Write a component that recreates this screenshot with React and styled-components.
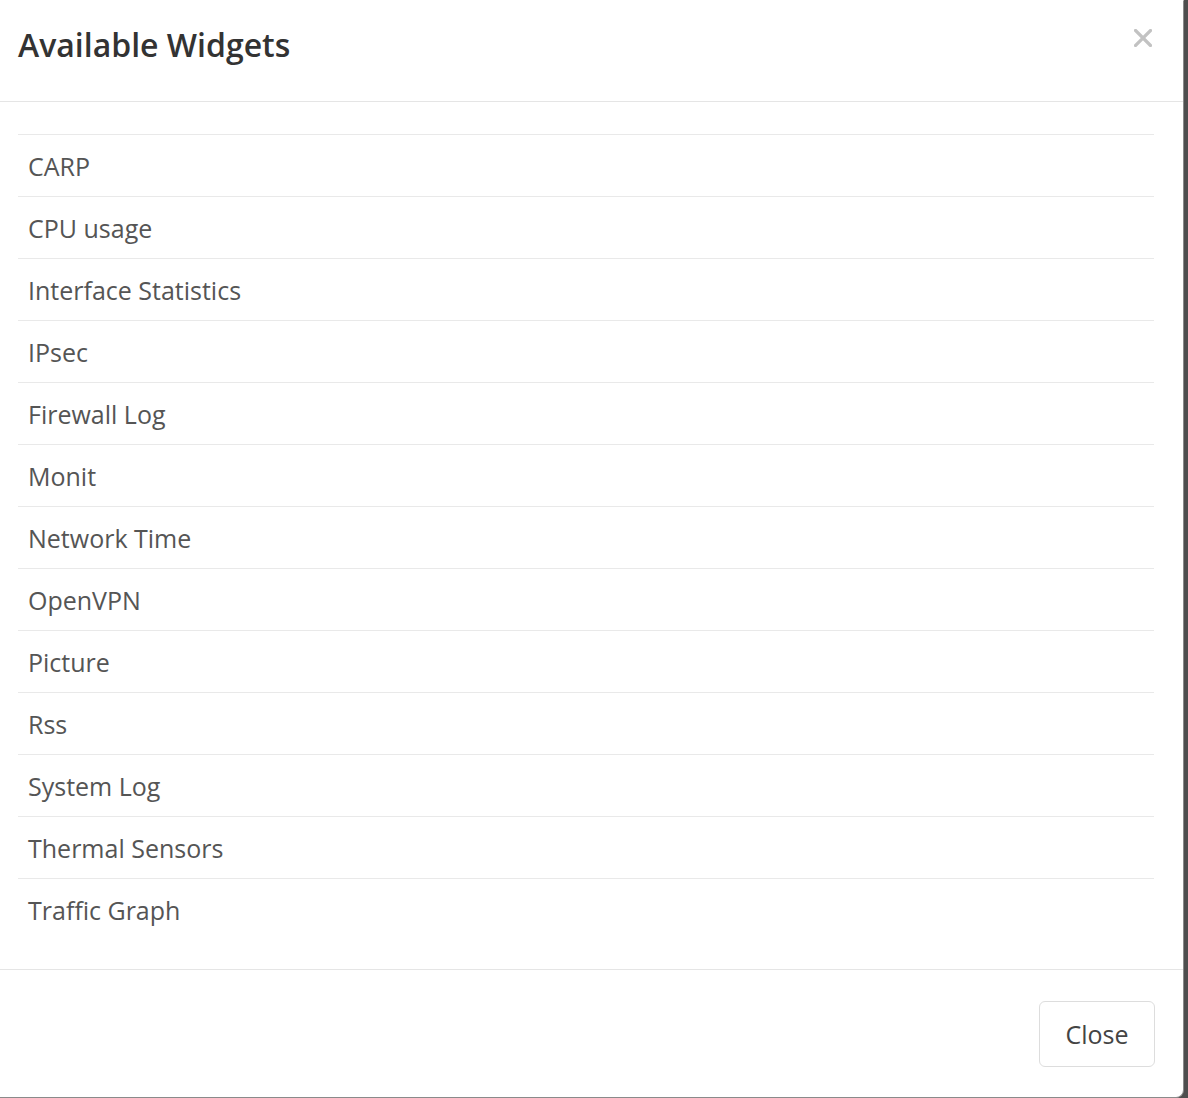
import styled, { createGlobalStyle } from 'styled-components';

const GlobalStyle = createGlobalStyle`
  html, body {
    margin: 0;
    padding: 0;
    overflow: hidden;
  }
  * {
    box-sizing: border-box;
  }
`

const StyledBackdrop = styled.div`
  min-height: 100vh;
  background: #4e4e4e;
  overflow: hidden;
`
const StyledModal = styled.div`
  width: 1196px;
  margin: 0 0 0 -12px;
  background: #fff;
  border: 1px solid #8a8a8a;
  border-top-color: #fff;
  border-left-color: #fff;
  border-radius: 0 0 8px 0;
  font-family: 'Open Sans', 'Liberation Sans', sans-serif;
`
const StyledHeader = styled.div`
  display: flex;
  align-items: flex-start;
  justify-content: space-between;
  padding: 24px 29px 36px 29px;
  border-bottom: 1px solid #e5e5e5;
`
const StyledTitle = styled.h4`
  margin: 0;
  font-size: 32px;
  line-height: 40px;
  font-weight: 600;
  color: #333;
`
const StyledCloseIcon = styled.button`
  display: flex;
  border: 0;
  background: none;
  padding: 0;
  margin: 4px 2px 0 0;
  cursor: pointer;
`
const StyledBody = styled.div`
  padding: 32px 29px 29px;
`
const StyledList = styled.div`
  display: flex;
  flex-direction: column;
`
const StyledListItem = styled.div`
  display: flex;
  align-items: center;
  height: 62px;
  padding: 0 10px;
  border-top: 1px solid #e9e9e9;
  font-size: 25px;
  color: #555;
`
const StyledFooter = styled.div`
  display: flex;
  justify-content: flex-end;
  padding: 31px 28px 30px;
  border-top: 1px solid #e5e5e5;
`
const StyledButton = styled.button`
  width: 116px;
  height: 66px;
  border: 1px solid #ddd;
  border-radius: 6px;
  background: #fff;
  font-family: 'Open Sans', 'Liberation Sans', sans-serif;
  font-size: 25px;
  color: #444;
  cursor: pointer;
`

const widgets = [
  'CARP',
  'CPU usage',
  'Interface Statistics',
  'IPsec',
  'Firewall Log',
  'Monit',
  'Network Time',
  'OpenVPN',
  'Picture',
  'Rss',
  'System Log',
  'Thermal Sensors',
  'Traffic Graph',
];

const App = () => {
  return (
    <StyledBackdrop>
      <GlobalStyle />
      <StyledModal>
        <StyledHeader>
          <StyledTitle>Available Widgets</StyledTitle>
          <StyledCloseIcon aria-label="Close">
            <svg width="18" height="18" viewBox="0 0 18 18">
              <path d="M1.5 1.5 L16.5 16.5 M16.5 1.5 L1.5 16.5" stroke="#c2c2c2" strokeWidth="3.2" strokeLinecap="square" />
            </svg>
          </StyledCloseIcon>
        </StyledHeader>
        <StyledBody>
          <StyledList>
            {widgets.map((name) => (
              <StyledListItem key={name}>{name}</StyledListItem>
            ))}
          </StyledList>
        </StyledBody>
        <StyledFooter>
          <StyledButton>Close</StyledButton>
        </StyledFooter>
      </StyledModal>
    </StyledBackdrop>
  );
};

export default App;
